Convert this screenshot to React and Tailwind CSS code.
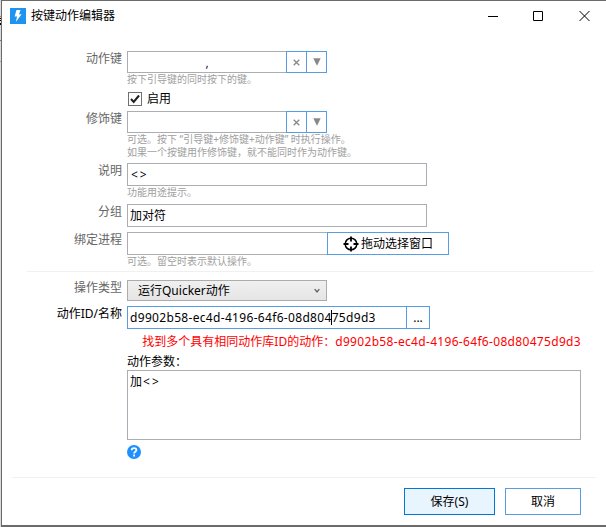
import React, { useState } from "react";

const Field = ({ label, strong, className = "", children }) => (
  <div className={`flex ${className}`}>
    <div className={`w-[122px] shrink-0 pr-[2px] text-right leading-4 ${strong ? "text-black" : "text-[#666]"}`}>{label}</div>
    <div className="ml-[3px] w-[454px] shrink-0">{children}</div>
  </div>
);

const Hint = ({ children }) => (
  <p className="whitespace-pre text-[10px] leading-[13px] text-[#a0a0a0]">{children}</p>
);

const KeyBox = ({ value }) => (
  <div className="flex h-[22px]">
    <div className="w-[159px] border border-r-0 border-[#abadb3] pt-[3px] text-center leading-4 text-[#1a1a4a]">{value}</div>
    <button className="flex w-[21px] items-center justify-center border border-[#569de5] text-[#888]">
      <svg width="7" height="7" viewBox="0 0 7 7" stroke="currentColor" strokeWidth="1.300" fill="none">
        <path d="M.7.7l5.6 5.6M6.3.7L.7 6.3" />
      </svg>
    </button>
    <button className="flex w-[20px] items-center justify-center border border-l-0 border-[#569de5] text-[#888]">
      <svg width="8" height="8" viewBox="0 0 8 8" fill="currentColor">
        <path d="M.3.3h7.4L4 7.7z" />
      </svg>
    </button>
  </div>
);

const TitleBar = () => (
  <div className="flex h-[29px] items-center pl-2">
    <svg width="16" height="16" viewBox="0 0 16 16">
      <rect width="16" height="16" fill="#1e93f0" />
      <path d="M6.5 2h4L9 6.2h2.6L5.8 14l1.3-5.6H4.6z" fill="#fff" />
    </svg>
    <span className="ml-[5px]">按键动作编辑器</span>
    <svg className="ml-auto mr-[15px]" width="104" height="12" viewBox="0 0 104 12" fill="none" stroke="#000">
      <path d="M1 6.500h10" />
      <path d="M46.500 1.500h9v9h-9z" />
      <path d="M92.500 1l10 10M102.500 1l-10 10" />
    </svg>
  </div>
);

const App = () => {
  const [enabled, setEnabled] = useState(true);

  return (
    <div className="flex h-[527px] w-[606px] bg-[#d9d9d9] font-['Noto_Sans','Noto_Sans_CJK_SC',sans-serif] text-[12px] leading-4 text-black">
      {/* edge of the window behind the dialog */}
      <div className="flex w-px shrink-0 flex-col pt-[16px]">
        <div className="h-px bg-[#c87830]" />
        <div className="mt-px h-px bg-black" />
        <div className="mt-px h-px bg-black" />
        <div className="mt-[2px] h-[2px] bg-black" />
        <div className="mt-[15px] h-px bg-[#777]" />
        <div className="mt-[20px] h-px bg-[#a5a5a5]" />
      </div>
      <div className="flex w-[605px] flex-col border-t border-b-2 border-l border-[#6b6b6b] bg-white">
        <TitleBar />

        <Field label="动作键" className="mt-[21px] h-[40px]">
          <KeyBox value="," />
          <Hint>按下引导键的同时按下的键。</Hint>
        </Field>

        <Field className="h-[20px]">
          <button className="flex items-center gap-[5px] pl-px" onClick={() => setEnabled(!enabled)}>
            <span className="flex h-[14px] w-[14px] items-center justify-center border border-[#707070]">
              {enabled && (
                <svg width="10" height="10" viewBox="0 0 10 10" fill="none" stroke="#212121" strokeWidth="2">
                  <path d="M1 5l2.700 3L9 1.500" />
                </svg>
              )}
            </span>
            启用
          </button>
        </Field>

        <Field label="修饰键" className="h-[52px]">
          <KeyBox />
          <Hint>可选。按下 “引导键+修饰键+动作键” 时执行操作。</Hint>
          <Hint>如果一个按键用作修饰键，就不能同时作为动作键。</Hint>
        </Field>

        <Field label="说明" className="h-[41px]">
          <div className="h-[23px] w-[300px] border border-[#abadb3] px-[3px] pt-[3px] tracking-[2px]">&lt;&gt;</div>
          <Hint>功能用途提示。</Hint>
        </Field>

        <Field label="分组" className="h-[28px]">
          <div className="h-[23px] w-[300px] border border-[#abadb3] px-[2px] pt-[3px]">加对符</div>
        </Field>

        <Field label="绑定进程" className="h-[39px]">
          <div className="flex h-[23px]">
            <div className="w-[200px] border border-r-0 border-[#abadb3]" />
            <button className="flex w-[122px] items-center justify-center gap-[2px] border border-[#569de5]">
              <svg width="16" height="16" viewBox="0 0 16 16" fill="none" stroke="#000">
                <circle cx="8" cy="8" r="5.800" strokeWidth="1.500" />
                <path d="M8 .5v5M8 10.500v5M.5 8h5M10.500 8h5" strokeWidth="1.800" />
              </svg>
              拖动选择窗口
            </button>
          </div>
          <Hint>可选。留空时表示默认操作。</Hint>
        </Field>

        <div className="ml-[25px] mr-[13px] h-[9px] border-t border-[#f0f0f0]" />

        <Field label="操作类型" className="h-[26px]">
          <div className="flex h-[21px] w-[200px] items-center justify-between border border-[#acacac] bg-linear-to-b from-[#f0f0f0] to-[#e5e5e5] pl-[10px] pr-[6px]">
            <span>运行Quicker动作</span>
            <svg width="6" height="6" viewBox="0 0 6 6" fill="none" stroke="#606060" strokeWidth="1.300">
              <path d="M.7 1.200L3 4l2.300-2.800" />
            </svg>
          </div>
        </Field>

        <Field label="动作ID/名称" strong className="h-[64px]">
          <div className="flex h-[23px]">
            <div className="flex w-[280px] items-center border border-[#569de5] pl-[2px] tracking-[0.32px]">
              <span>d9902b58-ec4d-4196-64f6-08d804</span>
              <span className="-mx-[0.5px] h-[15px] w-px bg-black" />
              <span>75d9d3</span>
            </div>
            <button className="w-[23px] border border-l-0 border-[#569de5] leading-4">...</button>
          </div>
          <p className="mt-[5px] text-right text-[#f00]">
            找到多个具有相同动作库ID的动作：<span className="tracking-[0.32px]">d9902b58-ec4d-4196-64f6-08d80475d9d3</span>
          </p>
          <p className="mt-[4px]">动作参数：</p>
        </Field>

        <Field className="h-[107px]">
          <div className="h-[70px] border border-[#abadb3] px-[2px] pt-[3px]">
            加<span className="ml-px tracking-[2px]">&lt;&gt;</span>
          </div>
          <svg className="mt-[5px]" width="14" height="14" viewBox="0 0 14 14">
            <circle cx="7" cy="7" r="7" fill="#1e90ff" />
            <path d="M4.700 5.300C4.700 2.300 9.400 2.400 9.400 5 9.400 6.700 7.100 6.600 7.100 8.400M7.100 9.500v1.900" fill="none" stroke="#fff" strokeWidth="1.800" />
          </svg>
        </Field>

        <div className="ml-[10px] mr-[10px] h-[11px] border-t border-[#f0f0f0]" />

        <div className="flex h-[27px] justify-end gap-[10px] pr-[25px]">
          <button className="w-[91px] border border-[#0078d7] bg-[#e8f5ff]">保存(S)</button>
          <button className="w-[76px] border border-[#569de5]">取消</button>
        </div>
      </div>
    </div>
  );
};

export default App;
